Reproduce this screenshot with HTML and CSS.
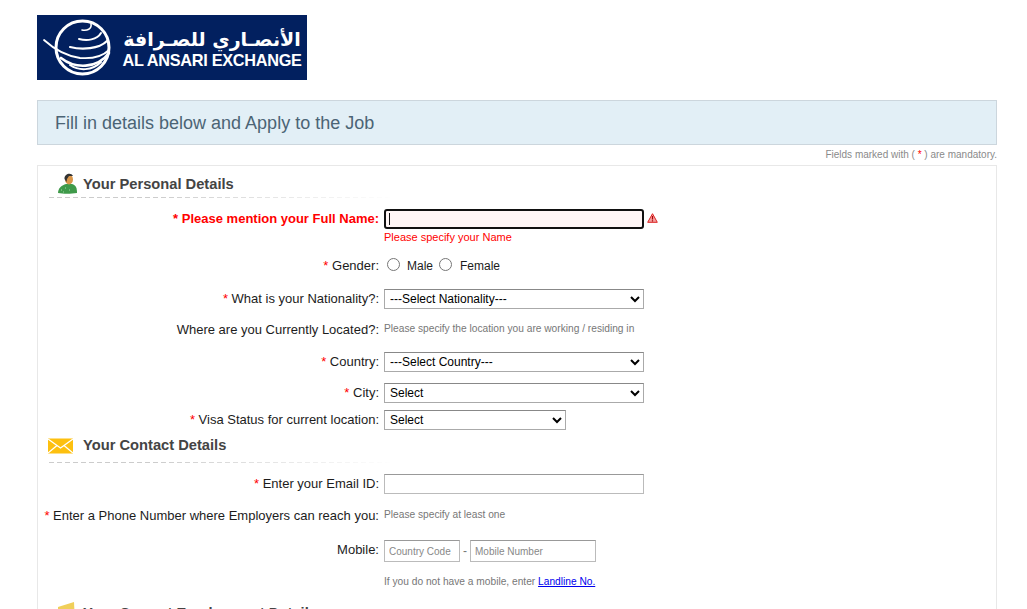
FILE: index.html
```html
<!DOCTYPE html>
<html lang="en">
<head>
    <meta charset="UTF-8">
    <meta name="viewport" content="width=device-width, initial-scale=1.0">
    <title>Apply to the Job</title>
    <link rel="stylesheet" href="styles.css">
</head>
<body>
    <div class="page">
        <!-- Logo -->
        <div class="logo">
            <svg class="logo-globe" width="82" height="65" viewBox="0 0 82 65">
                <g fill="none" stroke="#fff" stroke-linecap="round">
                    <circle cx="45.500" cy="32.500" r="26.500" stroke-width="3"/>
                    <path d="M7 25 C18 35 30 41 43 43 C56 44 66 41 72 35" stroke-width="1.800"/>
                    <path d="M24 43 C38 54 60 54 72 38" stroke-width="2.600"/>
                    <path d="M33 50 C42 56 55 56 64 47" stroke-width="2"/>
                    <path d="M33 32 C45 35 62 34 70 26" stroke-width="2.200"/>
                    <path d="M42 24 C50 26 60 25 64 18" stroke-width="2"/>
                    <path d="M45 15 C50 16 55 14 54 9" stroke-width="1.600"/>
                </g>
            </svg>
            <div class="logo-text">
                <div class="logo-arabic" lang="ar" dir="rtl">الأنصـاري للصـرافة</div>
                <div class="logo-latin">AL ANSARI EXCHANGE</div>
            </div>
        </div>

        <div class="banner">Fill in details below and Apply to the Job</div>
        <div class="mandatory-note">Fields marked with ( <span class="req">*</span> ) are mandatory.</div>

        <div class="panel">
            <!-- Dados pessoais -->
            <div class="section-head section-personal">
                <svg class="section-icon icon-person" width="20" height="21" viewBox="0 0 20 21">
                    <path d="M0 20 C0 15 4 12 8 11 L14 11 C18 12 19 15 19 20 C13 21 5 21 0 20 Z" fill="#3f9a4a"/>
                    <path d="M3 17 H4 M7 15 H8 M5 19 H6 M11 17 H12" stroke="#9fd6a5" stroke-width="1"/>
                    <ellipse cx="11" cy="6.500" rx="4" ry="5" fill="#d9964a"/>
                    <path d="M6.500 6 C6 1 13 -1 15 3 L11 3 L9 6 L8.500 9 Z" fill="#333"/>
                </svg>
                <h2 class="section-title">Your Personal Details</h2>
            </div>

            <div class="row row-name">
                <label class="label label-error"><span class="req">*</span> Please mention your Full Name:</label>
                <div class="field">
                    <div class="field-line">
                        <input type="text" class="input input-error">
                        <svg class="alert-icon" width="11" height="10" viewBox="0 0 11 10">
                            <path d="M5.500 .7 L10.300 9.300 L.7 9.300 Z" fill="#f4a0a0" stroke="#d22" stroke-width="1" stroke-linejoin="round"/>
                            <path d="M5.500 3 V6.500 M5.500 7.300 V8.500" stroke="#a00" stroke-width="1.200"/>
                        </svg>
                    </div>
                    <div class="error-text">Please specify your Name</div>
                </div>
            </div>

            <div class="row row-gender">
                <label class="label"><span class="req">*</span> Gender:</label>
                <div class="field radios">
                    <input type="radio" name="gender" class="radio"><span class="radio-text">Male</span>
                    <input type="radio" name="gender" class="radio"><span class="radio-text">Female</span>
                </div>
            </div>

            <div class="row row-nationality">
                <label class="label"><span class="req">*</span> What is your Nationality?:</label>
                <div class="field"><select class="select"><option>---Select Nationality---</option></select></div>
            </div>

            <div class="row row-located">
                <label class="label">Where are you Currently Located?:</label>
                <div class="field hint">Please specify the location you are working / residing in</div>
            </div>

            <div class="row row-country">
                <label class="label"><span class="req">*</span> Country:</label>
                <div class="field"><select class="select"><option>---Select Country---</option></select></div>
            </div>

            <div class="row row-city">
                <label class="label"><span class="req">*</span> City:</label>
                <div class="field"><select class="select"><option>Select</option></select></div>
            </div>

            <div class="row row-visa">
                <label class="label"><span class="req">*</span> Visa Status for current location:</label>
                <div class="field"><select class="select select-short"><option>Select</option></select></div>
            </div>

            <!-- Contato -->
            <div class="section-head section-contact">
                <svg class="section-icon icon-mail" width="25" height="16" viewBox="0 0 25 16">
                    <rect width="25" height="15" y="0.500" fill="#fdc00f"/>
                    <path d="M0 1 L12.500 10 L25 1 M0 15 L9 7.500 M25 15 L16 7.500" fill="none" stroke="#fff" stroke-width="1.300"/>
                </svg>
                <h2 class="section-title">Your Contact Details</h2>
            </div>

            <div class="row row-email">
                <label class="label"><span class="req">*</span> Enter your Email ID:</label>
                <div class="field"><input type="text" class="input"></div>
            </div>

            <div class="row row-phone">
                <label class="label"><span class="req">*</span> Enter a Phone Number where Employers can reach you:</label>
                <div class="field hint">Please specify at least one</div>
            </div>

            <div class="row row-mobile">
                <label class="label">Mobile:</label>
                <div class="field phone">
                    <input type="text" class="input input-code" placeholder="Country Code">
                    <span class="phone-dash">-</span>
                    <input type="text" class="input input-mobile" placeholder="Mobile Number">
                </div>
            </div>

            <div class="row row-landline">
                <div class="label"></div>
                <div class="field hint">If you do not have a mobile, enter <a href="#" class="link">Landline No.</a></div>
            </div>

            <!-- Emprego atual -->
            <div class="section-head section-employment">
                <svg class="section-icon icon-folder" width="17" height="20" viewBox="0 0 17 20">
                    <path d="M0 5 L16 0 L17 20 H0 Z" fill="#f0cf5a"/>
                </svg>
                <h2 class="section-title">Your Current Employment Details</h2>
            </div>
        </div>
    </div>
</body>
</html>
```

FILE: styles.css
```css
html, body {
    height: 609px;
    overflow: hidden;
}
body {
    font-family: "Liberation Sans", Arial, sans-serif;
    font-size: 13px;
    margin: 0;
    padding: 0;
    background-color: #fff;
    color: #1c1c1c;
}
.page {
    padding: 15px 30px 0 37px;
}

/* Logo */
.logo {
    width: 270px;
    height: 65px;
    background-color: #02205f;
    display: flex;
    align-items: center;
    color: #fff;
}
.logo-globe {
    flex: none;
}
.logo-text {
    margin-left: 2px;
    width: 182px;
    text-align: center;
}
.logo-arabic {
    font-size: 19px;
    font-weight: bold;
    line-height: 24px;
    font-family: "DejaVu Sans", sans-serif;
    white-space: nowrap;
}
.logo-latin {
    font-size: 16.300px;
    font-weight: bold;
    line-height: 18px;
    white-space: nowrap;
    letter-spacing: -0.300px;
}

/* Faixa */
.banner {
    margin-top: 20px;
    height: 45px;
    box-sizing: border-box;
    padding-left: 17px;
    line-height: 45px;
    font-size: 18px;
    color: #4b6475;
    background-color: #e2eff6;
    border: 1px solid #ccd6dd;
}
.mandatory-note {
    text-align: right;
    font-size: 10px;
    line-height: 11px;
    margin-top: 4px;
    color: #8a8a8a;
}
.req {
    color: #f00;
}

/* Painel */
.panel {
    margin-top: 5px;
    border: 1px solid #e8e8e8;
    height: 600px;
    padding-left: 11px;
}
.section-head {
    display: flex;
    align-items: center;
    width: 345px;
    height: 25px;
    padding-bottom: 1px;
    background:
        linear-gradient(90deg, rgba(255, 255, 255, 0) 30%, #fff 100%) bottom / 100% 1px no-repeat,
        repeating-linear-gradient(90deg, #ccc 0 5px, transparent 5px 8px) bottom / 100% 1px no-repeat;
}
.section-icon {
    flex: none;
}
.section-title {
    font-size: 14.700px;
    font-weight: bold;
    color: #444;
    margin: 0;
}
.section-personal {
    padding-top: 5px;
    height: 26px;
    align-items: flex-start;
}
.section-personal .section-title {
    margin-top: 5px;
}
.section-contact {
    padding-bottom: 7px;
    height: 23px;
    margin-top: 3px;
}
.section-employment {
    margin-top: 9px;
    background: none;
}
.icon-person {
    margin: 2px 5px 0 9px;
}
.icon-mail {
    margin: 2px 10px 0 -1px;
}
.icon-folder {
    margin: -2px 8px 0 9px;
}

/* Linhas */
.row {
    display: flex;
    margin-left: -11px;
}
.label {
    width: 341px;
    flex: none;
    text-align: right;
    line-height: 20px;
    white-space: nowrap;
}
.label-error {
    font-weight: bold;
    color: #f00;
}
.field {
    margin-left: 5px;
}
.field-line {
    display: flex;
    align-items: center;
}
.input {
    box-sizing: border-box;
    width: 260px;
    height: 20px;
    padding: 0 4px;
    margin: 0;
    border: 1px solid #bbb;
    border-top-color: #999;
    font-family: inherit;
    font-size: 10px;
    outline: none;
}
.input::placeholder {
    color: #888;
}
.input-error {
    background: linear-gradient(#111, #111) 3px 2px / 1px 12px no-repeat, #fff6f6;
    border: 2px solid #111;
    border-radius: 3px;
}
.alert-icon {
    margin: 0 0 2px 3px;
}
.error-text {
    color: #f00;
    font-size: 11px;
    line-height: 12px;
    margin-top: 2px;
}
.radios {
    display: flex;
    align-items: center;
    height: 20px;
    font-size: 12px;
}
.radio {
    margin: 0 7px 4px 3px;
    width: 13px;
    height: 13px;
}
.radio-text {
    margin-right: 3px;
}
.radio-text + .radio + .radio-text {
    margin-left: 1px;
}
.select {
    box-sizing: border-box;
    width: 260px;
    height: 20px;
    margin: 0;
    padding-left: 1px;
    font-family: inherit;
    font-size: 12px;
    background-color: #fff;
    border: 1px solid #aaa;
    border-top-color: #888;
}
.select-short {
    width: 182px;
}
.hint {
    font-size: 10.200px;
    color: #777;
    line-height: 18px;
}
.link {
    color: #00e;
}
.phone {
    display: flex;
    align-items: center;
}
.input-code {
    width: 76px;
    height: 22px;
}
.phone-dash {
    width: 10px;
    text-align: center;
    color: #777;
    font-size: 12px;
}
.input-mobile {
    width: 126px;
    height: 22px;
}

/* Posicao vertical das linhas */
.row-name { margin-top: 11px; }
.row-gender { margin-top: 13px; }
.row-nationality { margin-top: 13px; }
.row-located { margin-top: 11px; }
.row-country { margin-top: 12px; }
.row-city { margin-top: 11px; }
.row-visa { margin-top: 7px; }
.row-email { margin-top: 11px; }
.row-phone { margin-top: 12px; }
.row-mobile { margin-top: 14px; }
.row-landline { margin-top: 11px; }
```
